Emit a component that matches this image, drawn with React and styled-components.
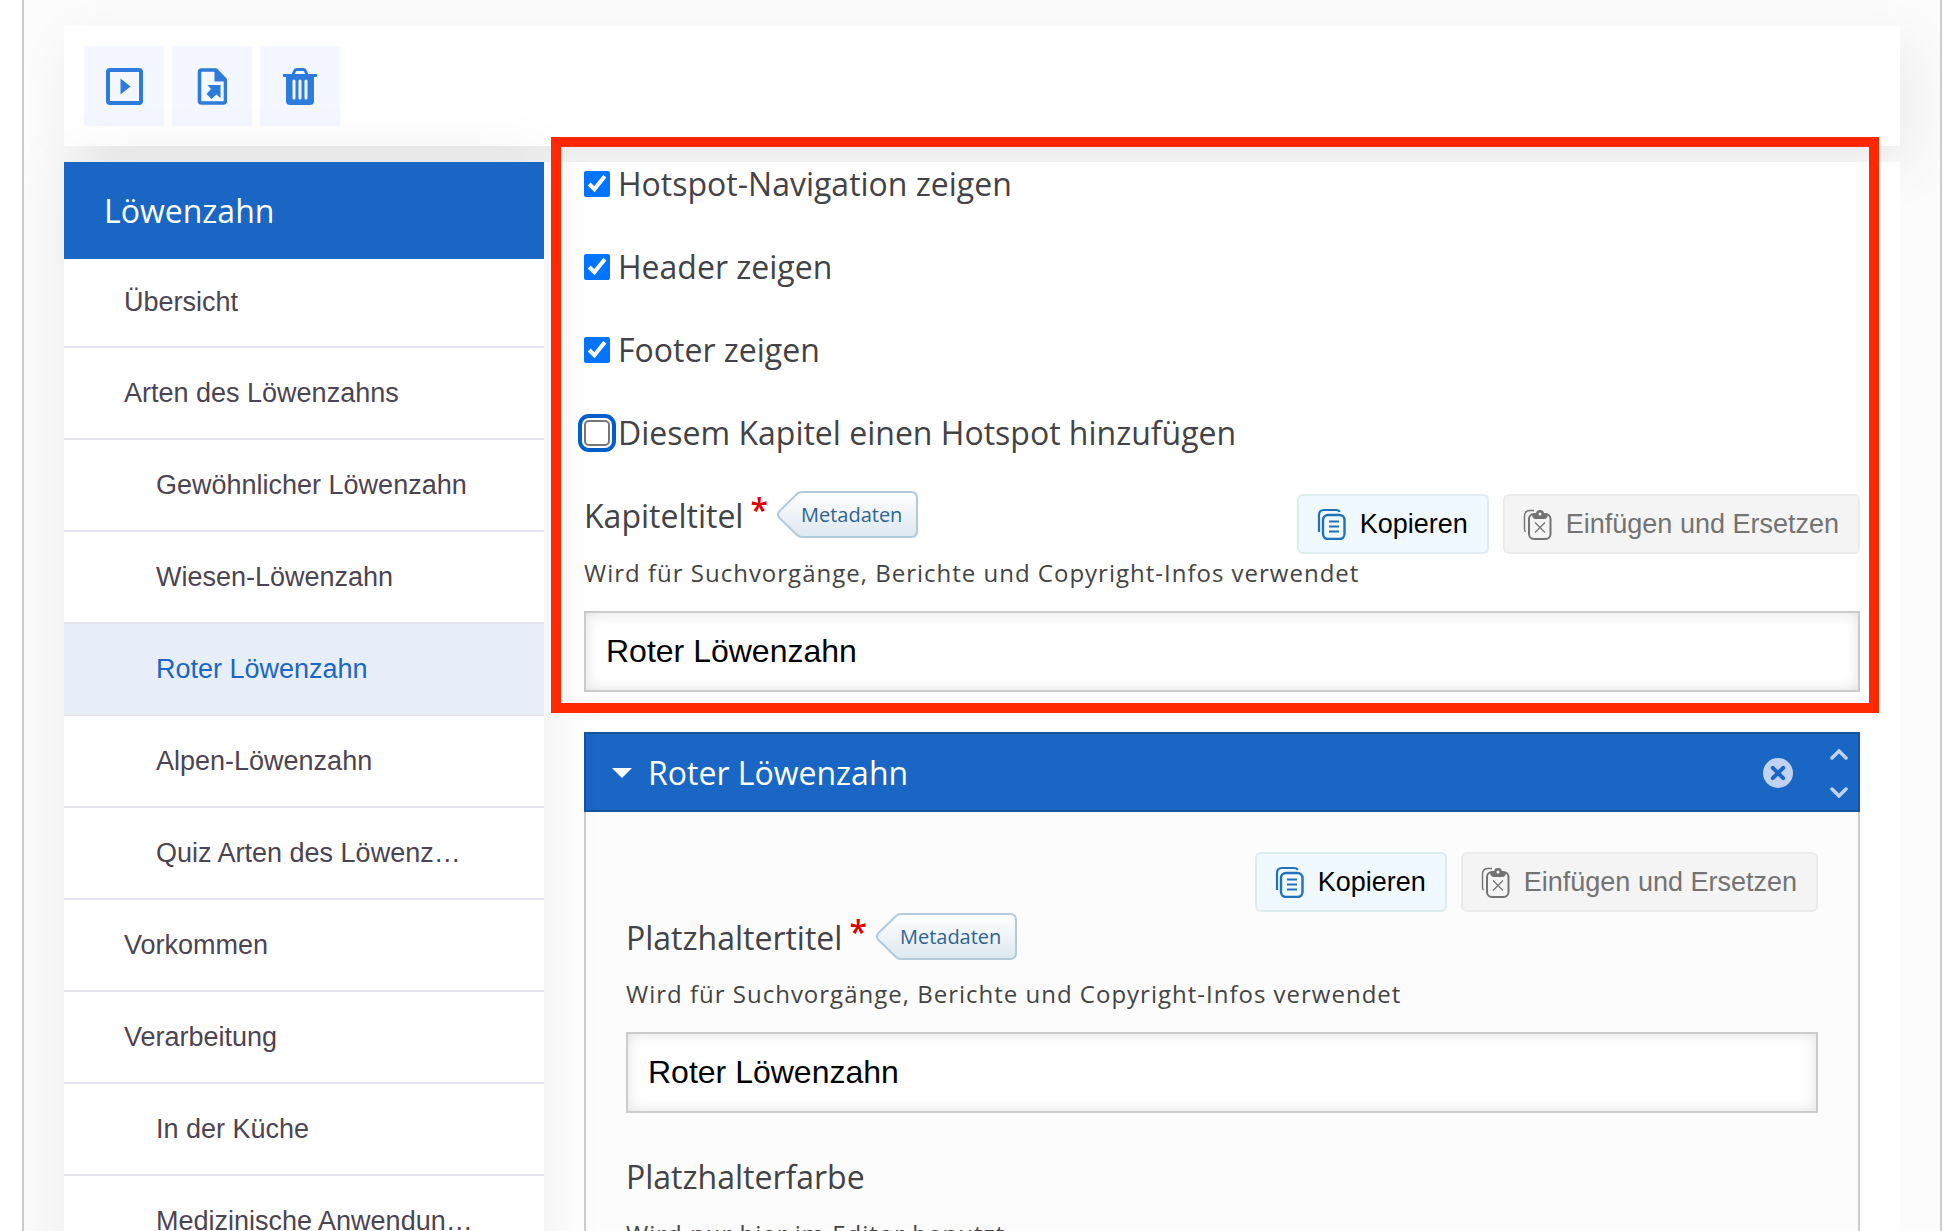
import React from 'react';
import styled, { createGlobalStyle, css } from 'styled-components';

const sans = '"Liberation Sans", Arial, sans-serif';
const open = '"Open Sans", sans-serif';

const GlobalStyle = createGlobalStyle`
  *, *::before, *::after {
    box-sizing: border-box;
  }
  body {
    margin: 0;
    background: #fff;
    font-family: ${open};
    color: #424247;
  }
`;

const Page = styled.div`
  height: 100vh;
  padding: 0 16px 0 22px;
  overflow: hidden;
`;

const Editor = styled.div`
  min-height: 100%;
  padding: 26px 40px 40px;
  background: #fcfcfc;
  border: solid #ccc;
  border-width: 0 2px;
  overflow: hidden;
`;

const Toolbar = styled.div`
  display: flex;
  gap: 8px;
  padding: 20px;
  margin-bottom: 16px;
  background: #fff;
  box-shadow: 10px 20px 60px rgba(0, 0, 0, 0.08);
`;

const ToolButton = styled.button`
  display: flex;
  align-items: center;
  justify-content: center;
  width: 80px;
  height: 80px;
  padding: 0;
  border: 0;
  border-radius: 2px;
  background: #f4f7ff;
  color: #2d7bdc;
`;

const Columns = styled.div`
  display: flex;
  position: relative;
`;

const Sidebar = styled.nav`
  position: relative;
  z-index: 1;
  flex: 0 0 480px;
  background: #fff;
  box-shadow: 0 0 60px rgba(0, 0, 0, 0.08);
`;

const SidebarTitle = styled.h2`
  margin: 0;
  padding: 0 40px;
  background: #1966c4;
  color: #fff;
  font-size: 32px;
  font-weight: 400;
  line-height: 97px;
`;

const ChapterList = styled.ul`
  margin: 0;
  padding: 0;
  list-style: none;
`;

const Chapter = styled.li`
  height: 92px;
  border-bottom: 2px solid #e6e4ee;
  background: ${({ $active }) => ($active ? '#e7eef9' : '#fff')};

  &:first-child {
    height: 89px;
  }
`;

const ChapterLink = styled.a`
  display: flex;
  align-items: center;
  height: 100%;
  padding-left: ${({ $level }) => ($level > 1 ? 92 : 60)}px;
  color: ${({ $active }) => ($active ? '#1966c4' : '#4b4453')};
  font-family: ${sans};
  font-size: 27px;
  text-decoration: none;
`;

const Main = styled.main`
  flex: 1;
  min-width: 0;
  padding: 0 40px;
  background: #fff;
`;

const Highlighted = styled.section`
  position: relative;

  &::after {
    content: '';
    position: absolute;
    z-index: 2;
    inset: -25px -19px -21px -33px;
    border: 10px solid #ff2800;
    pointer-events: none;
  }
`;

const Options = styled.div`
  display: grid;
  gap: 39px;
  margin-bottom: 36px;
`;

const Option = styled.label`
  display: flex;
  align-items: center;
  gap: 8px;
  font-size: 32px;
  line-height: 44px;
`;

const Checkbox = styled.input`
  width: 26px;
  height: 26px;
  margin: 0;
  accent-color: #0075ff;

  &:not(:checked) {
    appearance: none;
    border: 2px solid #767676;
    border-radius: 5px;
    background: #fff;
  }

  ${({ $focused }) =>
    $focused &&
    css`
      outline: 4px solid #005fcc;
      outline-offset: 2px;
    `}
`;

const FieldHead = styled.div`
  display: flex;
  justify-content: space-between;
  align-items: flex-start;
  min-height: 63px;
`;

const LabelGroup = styled.div`
  display: flex;
  align-items: center;
  height: 47px;
`;

const Label = styled.label`
  display: flex;
  gap: 7px;
  padding-top: 2px;
  font-size: 32px;
  line-height: 44px;
`;

const Required = styled.span`
  color: #df0000;
  font-weight: 600;
  line-height: 32px;
`;

const TagButton = styled.button`
  position: relative;
  z-index: 0;
  width: 141px;
  height: 47px;
  margin-left: 9px;
  padding: 0 12px 0 24px;
  border: 0;
  background: none;
  color: #2f6394;
  font-family: ${open};
  font-size: 20px;
  text-align: left;

  svg {
    position: absolute;
    inset: 0;
    z-index: -1;
  }
`;

const Actions = styled.div`
  display: flex;
  justify-content: flex-end;
  gap: 14px;
  padding: 3px 0 1px;
`;

const ActionButton = styled.button`
  display: flex;
  align-items: center;
  gap: 14px;
  height: 60px;
  padding: 0 19px 0 18px;
  border: 2px solid #dbeeed;
  border-radius: 6px;
  background: #f0f9ff;
  color: #000;
  font-family: ${sans};
  font-size: 27px;

  &:disabled {
    border-color: #ebebeb;
    background: #f4f4f4;
    color: #737373;
  }
`;

const Description = styled.p`
  margin: 0 0 20px;
  color: #444;
  font-size: 24px;
  letter-spacing: 1px;
  line-height: 36px;
`;

const TextInput = styled.input`
  display: block;
  width: 100%;
  height: 81px;
  padding: 0 20px;
  border: 2px solid #ccc;
  border-radius: 0;
  background: #fff;
  box-shadow: inset 0 0 14px rgba(0, 0, 0, 0.12);
  color: #000;
  font-family: ${sans};
  font-size: 32px;
`;

const Panel = styled.section`
  margin-top: 40px;
`;

const PanelHeader = styled.header`
  display: flex;
  align-items: center;
  height: 80px;
  padding: 2px 10px 0 26px;
  border: 2px solid #1553a0;
  background: #1966c4;
  color: #fff;
`;

const PanelTitle = styled.h3`
  flex: 1;
  margin: 0 0 0 16px;
  font-size: 32px;
  font-weight: 400;
  line-height: 44px;
`;

const IconButton = styled.button`
  display: flex;
  padding: 0;
  border: 0;
  background: none;
  color: #c1d2f0;
`;

const OrderButtons = styled.div`
  display: grid;
  gap: 27px;
  margin-left: 37px;
`;

const PanelBody = styled.div`
  padding: 37px 40px 40px;
  border: solid #ccc;
  border-width: 0 2px 2px;
  background: #fcfcfc;
`;

const Field = styled.div`
  margin-bottom: 40px;
`;

const PreviewIcon = () => (
  <svg width="38" height="38" viewBox="0 0 38 38" fill="none">
    <rect x="3" y="3" width="33" height="33" rx="2" stroke="currentColor" strokeWidth="4" />
    <path d="M15.500 11.500v16l10-8z" fill="currentColor" />
  </svg>
);

const ExportIcon = () => (
  <svg width="30" height="38" viewBox="0 0 30 38" fill="none">
    <path d="M2.500 5Q2.500 3 4.500 3H18L28.500 13.500V34Q28.500 36 26.500 36H4.500Q2.500 36 2.500 34Z" stroke="currentColor" strokeWidth="3.600" />
    <path d="M17.500 1.500h2.500L30 12v2.500H17.500z" fill="currentColor" />
    <path d="M10.500 18h13v13l-4-3.500-5 4.500-5-5 4.500-5z" fill="currentColor" />
  </svg>
);

const TrashIcon = () => (
  <svg width="34" height="38" viewBox="0 0 34 38" fill="none">
    <path d="M10 8l1.500-4Q12 2.500 13.500 2.500h7Q22 2.500 22.500 4L24 8" stroke="currentColor" strokeWidth="3" />
    <path d="M0 7h34v3h-3v24q0 4-4 4H7q-4 0-4-4V10H0z" fill="currentColor" />
    <path d="M11 14v17M17 14v17M23 14v17" stroke="#f4f7ff" strokeWidth="3" strokeLinecap="round" />
  </svg>
);

const CopyIcon = () => (
  <svg width="29" height="32" viewBox="0 0 29 32" fill="none" stroke="#2272bb">
    <path d="M2 24V7Q2 2 7 2h12q3 0 3.500 2" strokeWidth="2.200" />
    <rect x="6" y="7" width="21.500" height="24" rx="5" strokeWidth="2.400" />
    <path d="M12 13.500h10M12 18.500h10M12 23.500h10" strokeWidth="2" />
  </svg>
);

const PasteIcon = () => (
  <svg width="29" height="32" viewBox="0 0 29 32" fill="none" stroke="currentColor">
    <path d="M2.500 24Q1.500 23 1.500 21V8Q1.500 3 6.500 2.500H11" strokeWidth="1.400" />
    <rect x="6" y="6" width="21.500" height="25" rx="5" strokeWidth="2" />
    <path d="M9 6h4q0-4 4-4t4 4h4q0 5-4 5h-8q-4 0-4-5z" fill="currentColor" stroke="none" />
    <circle cx="17" cy="6" r="1.500" fill="#f4f4f4" stroke="none" />
    <path d="M12 14.500l10 10M22 14.500l-10 10" strokeWidth="1.200" />
  </svg>
);

const TagShape = () => (
  <svg width="141" height="47" viewBox="0 0 141 47">
    <defs>
      <linearGradient id="tag-fill" x1="0" y1="0" x2="0" y2="1">
        <stop offset="0" stopColor="#fff" />
        <stop offset="1" stopColor="#dde8f0" />
      </linearGradient>
    </defs>
    <path
      d="M25 1H134Q140 1 140 7V40Q140 46 134 46H25Q22 46 20 44L2.500 27Q-.5 23.500 2.500 20L20 3Q22 1 25 1Z"
      fill="url(#tag-fill)"
      stroke="#b3cadc"
      strokeWidth="2"
    />
  </svg>
);

const CaretIcon = () => (
  <svg width="20" height="10" viewBox="0 0 20 10">
    <path d="M0 0h20L10 10z" fill="currentColor" />
  </svg>
);

const RemoveIcon = () => (
  <svg width="30" height="30" viewBox="0 0 30 30">
    <circle cx="15" cy="15" r="15" fill="currentColor" />
    <path d="M9.800 9.800l10.400 10.400M20.200 9.800L9.800 20.200" stroke="#1966c4" strokeWidth="4" strokeLinecap="round" />
  </svg>
);

const ChevronIcon = ({ down }) => (
  <svg width="18" height="11" viewBox="0 0 18 11" fill="none">
    <path
      d={down ? 'M2 2l7 7 7-7' : 'M2 9l7-7 7 7'}
      stroke="currentColor"
      strokeWidth="3.500"
      strokeLinecap="round"
    />
  </svg>
);

const chapters = [
  { title: 'Übersicht', level: 1 },
  { title: 'Arten des Löwenzahns', level: 1 },
  { title: 'Gewöhnlicher Löwenzahn', level: 2 },
  { title: 'Wiesen-Löwenzahn', level: 2 },
  { title: 'Roter Löwenzahn', level: 2, active: true },
  { title: 'Alpen-Löwenzahn', level: 2 },
  { title: 'Quiz Arten des Löwenz…', level: 2 },
  { title: 'Vorkommen', level: 1 },
  { title: 'Verarbeitung', level: 1 },
  { title: 'In der Küche', level: 2 },
  { title: 'Medizinische Anwendun…', level: 2 },
];

const options = [
  { id: 'hotspot-navigation', label: 'Hotspot-Navigation zeigen', checked: true },
  { id: 'show-header', label: 'Header zeigen', checked: true },
  { id: 'show-footer', label: 'Footer zeigen', checked: true },
  { id: 'add-hotspot', label: 'Diesem Kapitel einen Hotspot hinzufügen', focused: true },
];

const CopyPaste = () => (
  <Actions>
    <ActionButton type="button">
      <CopyIcon />
      Kopieren
    </ActionButton>
    <ActionButton type="button" disabled>
      <PasteIcon />
      Einfügen und Ersetzen
    </ActionButton>
  </Actions>
);

const FieldLabel = ({ id, children }) => (
  <LabelGroup>
    <Label htmlFor={id}>
      {children}
      <Required>*</Required>
    </Label>
    <TagButton type="button">
      <TagShape />
      Metadaten
    </TagButton>
  </LabelGroup>
);

const App = () => {
  return (
    <Page>
      <GlobalStyle />
      <Editor>
        <Toolbar>
          <ToolButton type="button" aria-label="Vorschau">
            <PreviewIcon />
          </ToolButton>
          <ToolButton type="button" aria-label="Exportieren">
            <ExportIcon />
          </ToolButton>
          <ToolButton type="button" aria-label="Löschen">
            <TrashIcon />
          </ToolButton>
        </Toolbar>
        <Columns>
          <Sidebar>
            <SidebarTitle>Löwenzahn</SidebarTitle>
            <ChapterList>
              {chapters.map(({ title, level, active }) => (
                <Chapter key={title} $active={active}>
                  <ChapterLink href="#" $level={level} $active={active}>
                    {title}
                  </ChapterLink>
                </Chapter>
              ))}
            </ChapterList>
          </Sidebar>
          <Main>
            <Highlighted>
              <Options>
                {options.map(({ id, label, checked, focused }) => (
                  <Option key={id} htmlFor={id}>
                    <Checkbox type="checkbox" id={id} defaultChecked={checked} $focused={focused} />
                    {label}
                  </Option>
                ))}
              </Options>
              <FieldHead>
                <FieldLabel id="chapter-title">Kapiteltitel</FieldLabel>
                <CopyPaste />
              </FieldHead>
              <Description>Wird für Suchvorgänge, Berichte und Copyright-Infos verwendet</Description>
              <TextInput id="chapter-title" type="text" defaultValue="Roter Löwenzahn" />
            </Highlighted>
            <Panel>
              <PanelHeader>
                <CaretIcon />
                <PanelTitle>Roter Löwenzahn</PanelTitle>
                <IconButton type="button" aria-label="Entfernen">
                  <RemoveIcon />
                </IconButton>
                <OrderButtons>
                  <IconButton type="button" aria-label="Nach oben">
                    <ChevronIcon />
                  </IconButton>
                  <IconButton type="button" aria-label="Nach unten">
                    <ChevronIcon down />
                  </IconButton>
                </OrderButtons>
              </PanelHeader>
              <PanelBody>
                <CopyPaste />
                <Field>
                  <FieldHead>
                    <FieldLabel id="placeholder-title">Platzhaltertitel</FieldLabel>
                  </FieldHead>
                  <Description>Wird für Suchvorgänge, Berichte und Copyright-Infos verwendet</Description>
                  <TextInput id="placeholder-title" type="text" defaultValue="Roter Löwenzahn" />
                </Field>
                <Field>
                  <FieldHead>
                    <Label as="span">Platzhalterfarbe</Label>
                  </FieldHead>
                  <Description>Wird nur hier im Editor benutzt</Description>
                </Field>
              </PanelBody>
            </Panel>
          </Main>
        </Columns>
      </Editor>
    </Page>
  );
};

export default App;
